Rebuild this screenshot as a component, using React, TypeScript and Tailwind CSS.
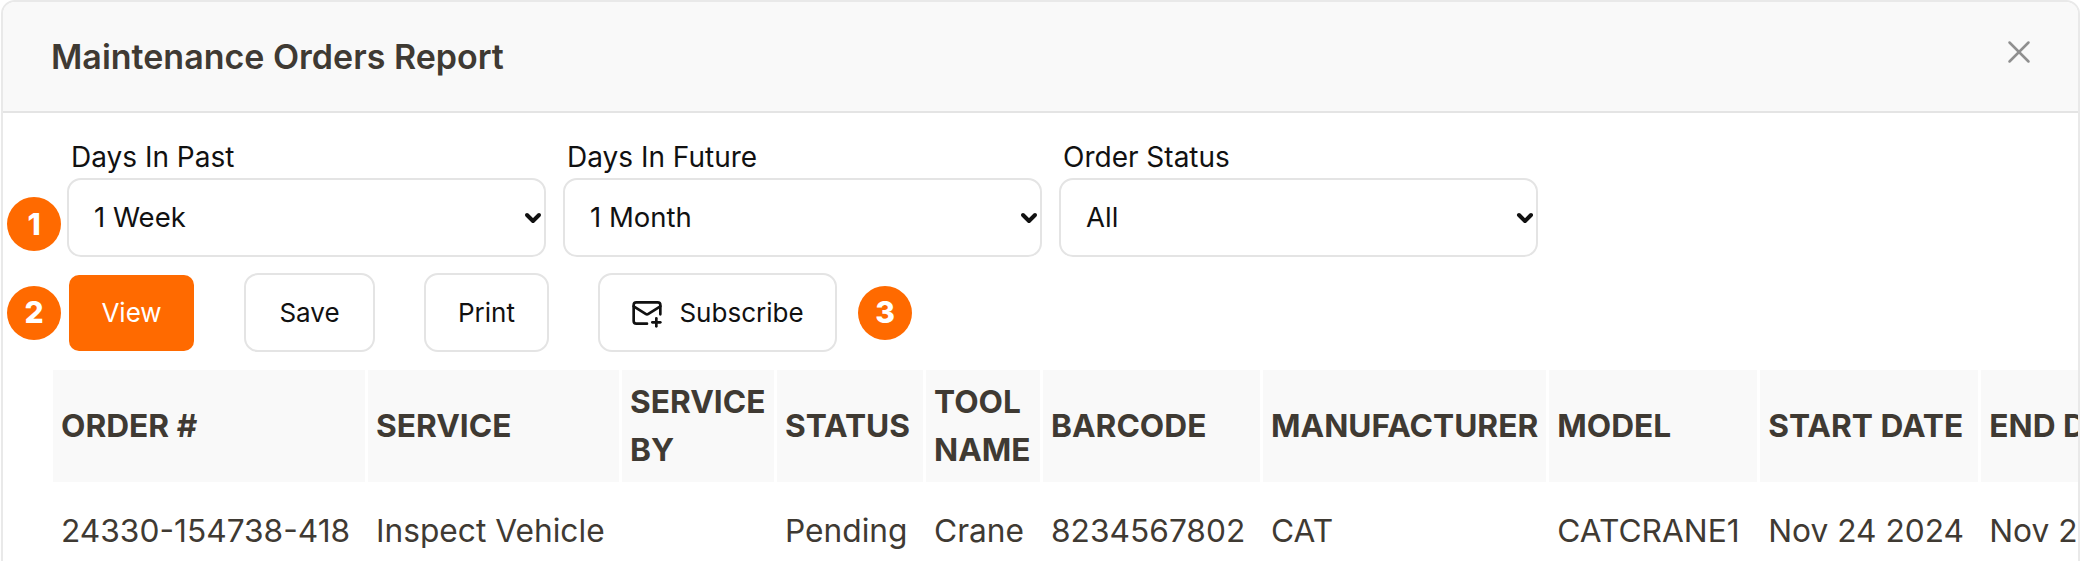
import { ChevronDown, MailPlus, X } from "lucide-react";

const filters = [
	{ label: "Days In Past", value: "1 Week", options: ["1 Week", "2 Weeks", "1 Month"] },
	{ label: "Days In Future", value: "1 Month", options: ["1 Week", "1 Month", "3 Months"] },
	{ label: "Order Status", value: "All", options: ["All", "Pending", "Completed"] },
];

const columns = [
	{ label: "ORDER #", width: "w-[312px]", value: "24330-154738-418" },
	{ label: "SERVICE", width: "w-[251px]", value: "Inspect Vehicle" },
	{ label: "SERVICE BY", width: "w-[152px]", value: "" },
	{ label: "STATUS", width: "w-[146px]", value: "Pending" },
	{ label: "TOOL NAME", width: "w-[114px]", value: "Crane" },
	{ label: "BARCODE", width: "w-[217px]", value: "8234567802" },
	{ label: "MANUFACTURER", width: "w-[283px]", value: "CAT" },
	{ label: "MODEL", width: "w-[208px]", value: "CATCRANE1" },
	{ label: "START DATE", width: "w-[218px]", value: "Nov 24 2024" },
	{ label: "END DATE", width: "w-[219px]", value: "Nov 24 2024" },
];

function Badge({ n }: { n: number }) {
	return (
		<div className="flex size-[54px] shrink-0 items-center justify-center rounded-full bg-[#ff6a00] text-[30px] font-extrabold text-white">
			{n}
		</div>
	);
}

function OutlineButton({ children, className }: { children: React.ReactNode; className: string }) {
	return (
		<button
			type="button"
			className={`flex h-[79px] items-center justify-center rounded-[14px] border-2 border-[#e4e4e4] bg-white text-[26px] text-[#111] ${className}`}
		>
			{children}
		</button>
	);
}

export default function App() {
	return (
		<div className="h-[561px] w-[2081px] overflow-hidden bg-white font-['Inter',sans-serif]">
			<div className="ml-[1px] h-[600px] w-[2079px] overflow-hidden rounded-t-[14px] border-2 border-[#e9e9e9]">
				{/* header */}
				<div className="flex h-[111px] items-center justify-between border-b-2 border-[#e4e4e4] bg-[#f9f9f9] pr-[40px] pl-[48px]">
					<h1 className="text-[34px] font-semibold text-[#3f3a33]">Maintenance Orders Report</h1>
					<X className="mb-[9px] size-[38px] text-[#8f8f8f]" strokeWidth={1.6} />
				</div>

				{/* filters */}
				<div className="flex items-end pt-[24px] pl-[4px]">
					<div className="mr-[6px] mb-[6px]">
						<Badge n={1} />
					</div>
					<div className="flex gap-[17px]">
						{filters.map((f) => (
							<div key={f.label} className="w-[479px]">
								<label className="block pb-[1px] pl-[4px] text-[28px] leading-[40px] text-[#111]">{f.label}</label>
								<div className="relative">
									<select
										defaultValue={f.value}
										className="h-[79px] w-full appearance-none rounded-[14px] border-2 border-[#e4e4e4] bg-white pl-[25px] text-[27.5px] text-[#111]"
									>
										{f.options.map((o) => (
											<option key={o}>{o}</option>
										))}
									</select>
									<ChevronDown
										className="pointer-events-none absolute top-[28px] right-[1px] size-[24px] text-[#111]"
										strokeWidth={4}
									/>
								</div>
							</div>
						))}
					</div>
				</div>

				{/* actions */}
				<div className="flex items-center pt-[16px] pl-[4px]">
					<Badge n={2} />
					<button
						type="button"
						className="ml-[8px] flex h-[76px] w-[125px] items-center justify-center rounded-[10px] bg-[#ff6a00] text-[26px] text-white"
					>
						View
					</button>
					<OutlineButton className="ml-[50px] w-[131px]">Save</OutlineButton>
					<OutlineButton className="ml-[49px] w-[125px]">Print</OutlineButton>
					<OutlineButton className="ml-[49px] w-[239px] gap-[16px]">
						<MailPlus className="size-[32px]" strokeWidth={2} />
						Subscribe
					</OutlineButton>
					<div className="ml-[21px]">
						<Badge n={3} />
					</div>
				</div>

				{/* table */}
				<div className="overflow-hidden pt-[18px] pl-[47px]">
					<table className="w-max table-fixed border-separate border-spacing-x-[3px] border-spacing-y-0 text-[31.7px] leading-[48px] text-[#3f3a33]">
						<thead>
							<tr>
								{columns.map((c) => (
									<th key={c.label} className={`h-[112px] bg-[#f9f9f9] px-[8px] text-left align-middle font-bold ${c.width}`}>
										{c.label}
									</th>
								))}
							</tr>
						</thead>
						<tbody>
							<tr>
								{columns.map((c) => (
									<td key={c.label} className="px-[8px] py-[25px] font-normal whitespace-nowrap">
										{c.value}
									</td>
								))}
							</tr>
						</tbody>
					</table>
				</div>
			</div>
		</div>
	);
}
